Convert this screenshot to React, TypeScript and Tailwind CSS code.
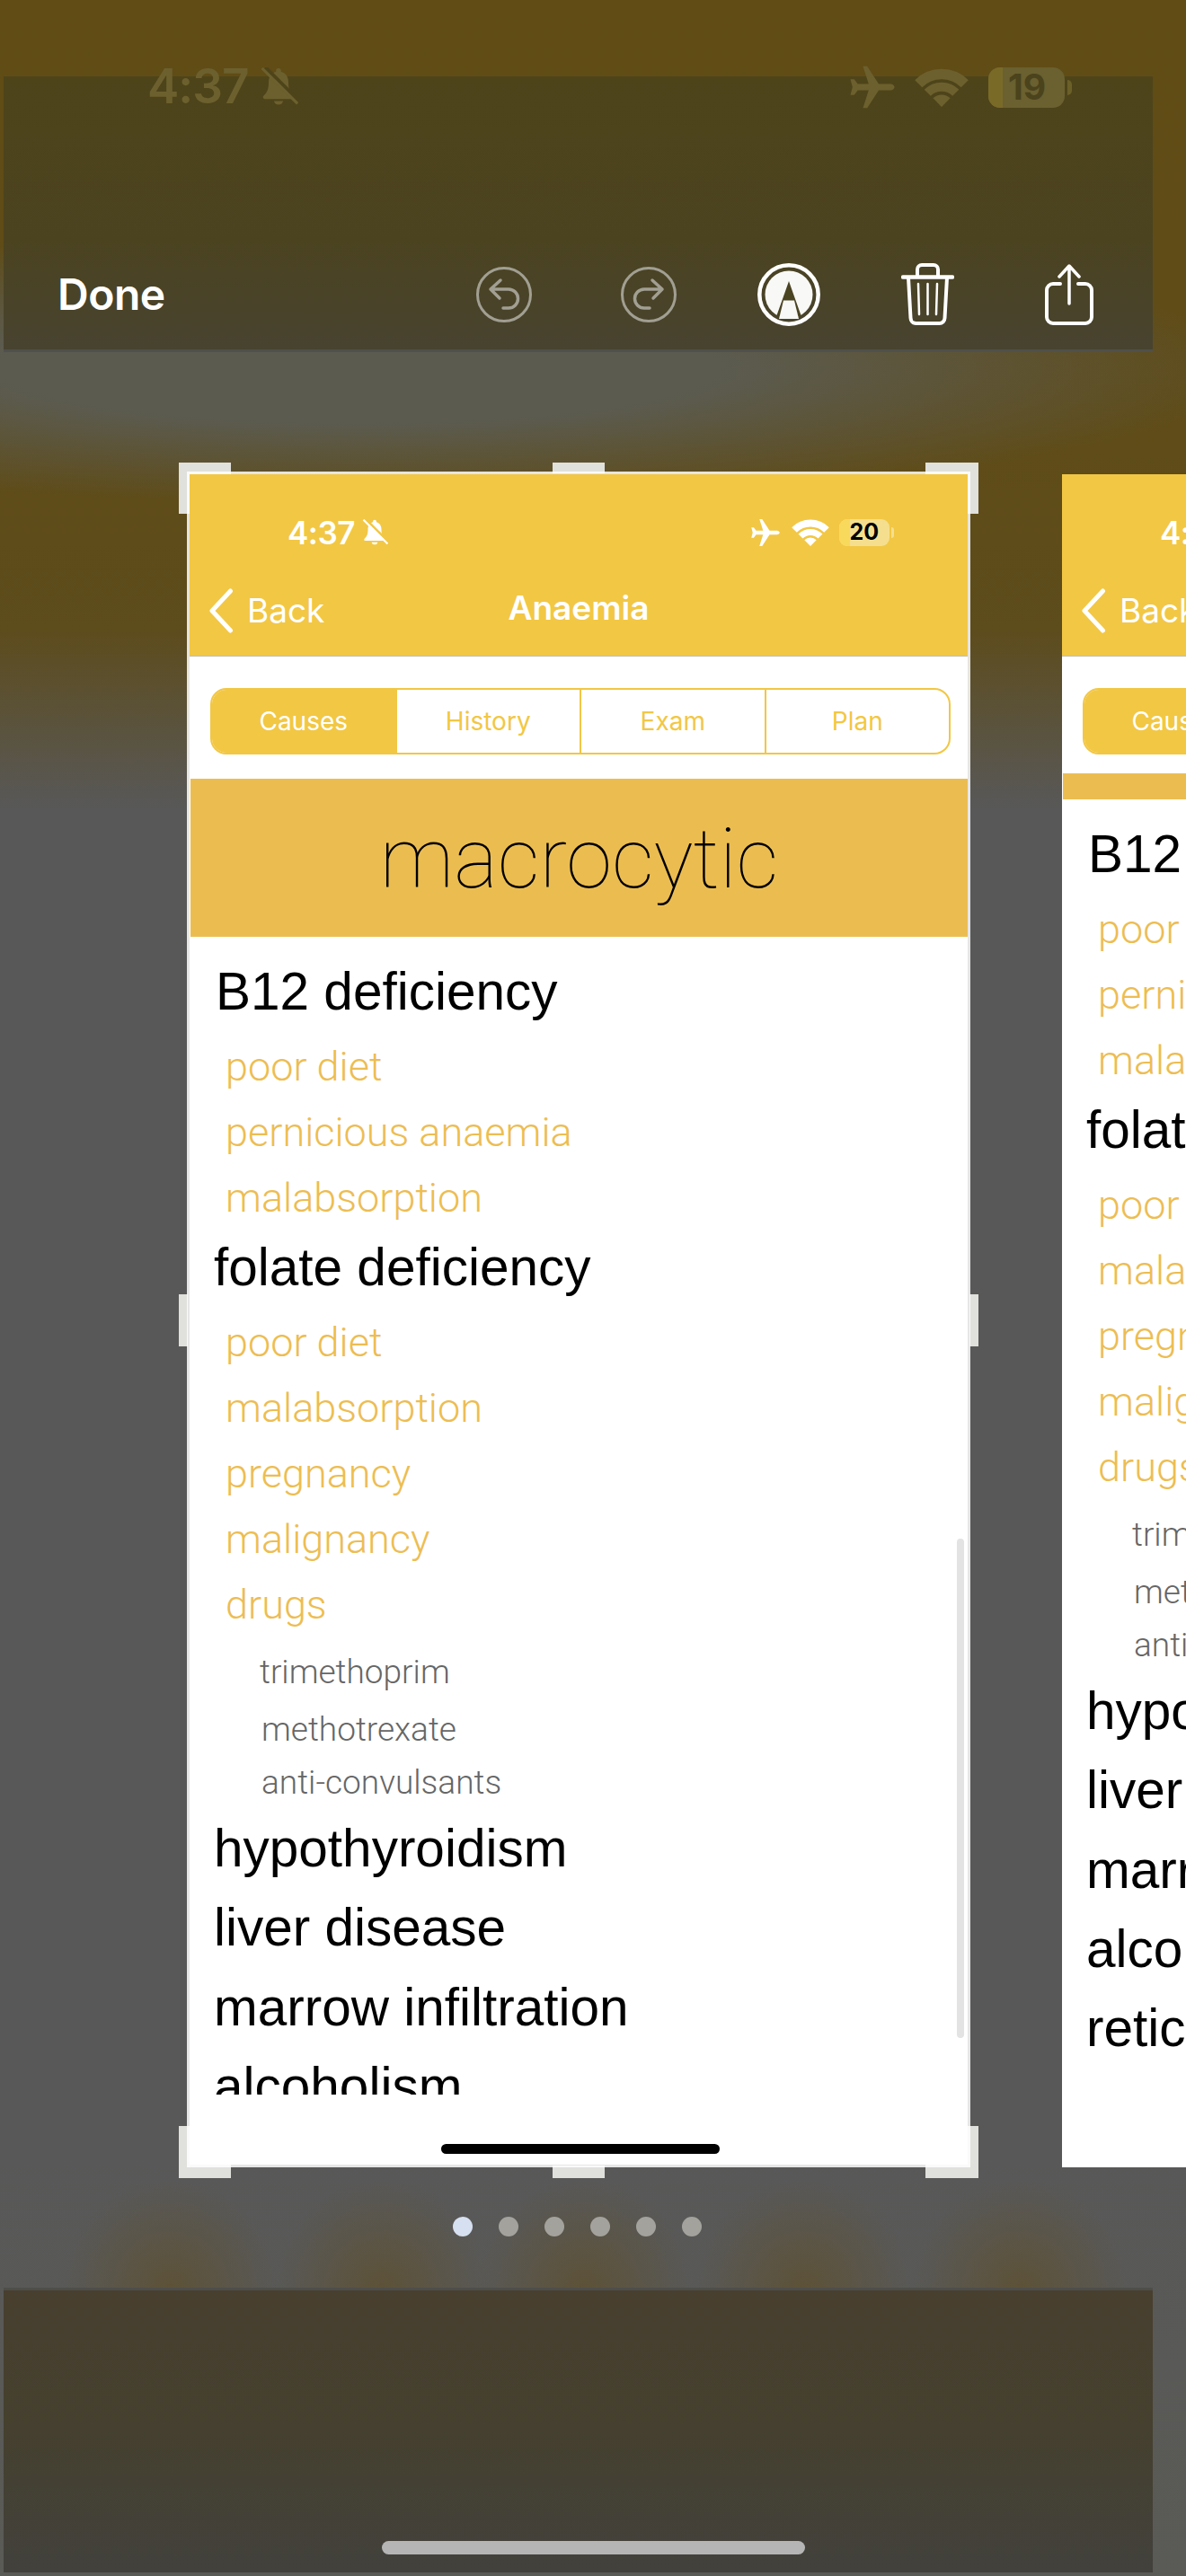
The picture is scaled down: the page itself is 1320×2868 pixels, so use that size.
import React from 'react';

type Row = { text: string; cls: string };

const BIG = "font-['Liberation_Sans',sans-serif] text-[58.5px] leading-[60px] text-black";
const SUB = "font-['Roboto',sans-serif] font-light text-[45px] leading-[60px] text-[#edbd52]";
const DRUG = "font-['Roboto',sans-serif] font-light text-[37px] leading-[50px] text-[#666666]";

const rows: Row[] = [
  { text: 'B12 deficiency', cls: `${BIG} ml-[29px]` },
  { text: 'poor diet', cls: `${SUB} ml-[40px] mt-[24px]` },
  { text: 'pernicious anaemia', cls: `${SUB} ml-[40px] mt-[13px]` },
  { text: 'malabsorption', cls: `${SUB} ml-[40px] mt-[13px]` },
  { text: 'folate deficiency', cls: `${BIG} ml-[27px] mt-[17px]` },
  { text: 'poor diet', cls: `${SUB} ml-[40px] mt-[24px]` },
  { text: 'malabsorption', cls: `${SUB} ml-[40px] mt-[13px]` },
  { text: 'pregnancy', cls: `${SUB} ml-[40px] mt-[13px]` },
  { text: 'malignancy', cls: `${SUB} ml-[40px] mt-[13px]` },
  { text: 'drugs', cls: `${SUB} ml-[40px] mt-[13px]` },
  { text: 'trimethoprim', cls: `${DRUG} ml-[78px] mt-[20px]` },
  { text: 'methotrexate', cls: `${DRUG} ml-[80px] mt-[14px]` },
  { text: 'anti-convulsants', cls: `${DRUG} ml-[80px] mt-[9px]` },
  { text: 'hypothyroidism', cls: `${BIG} ml-[27px] mt-[18px]` },
  { text: 'liver disease', cls: `${BIG} ml-[27px] mt-[28px]` },
  { text: 'marrow infiltration', cls: `${BIG} ml-[27px] mt-[29px]` },
  { text: 'alcoholism', cls: `${BIG} ml-[27px] mt-[28px]` },
  { text: 'reticulocytosis', cls: `${BIG} ml-[27px] mt-[28px]` },
];

function BellSlash({ color, cut, className }: { color: string; cut: string; className: string }) {
  return (
    <svg viewBox="0 0 24 24" className={className}>
      <path
        fill={color}
        d="M12 .5c-.9 0-1.500.6-1.500 1.500v.6C7.400 3.400 6 6 6 9.200c0 4.300-1 6-2.500 7.500-.6.6-.9 1-.9 1.500 0 .6.4 1 1.100 1H20.300c.7 0 1.100-.4 1.100-1 0-.5-.3-.9-.9-1.500C19 15.200 18 13.500 18 9.200 18 6 16.600 3.400 13.500 2.600V2C13.500 1.100 12.900.5 12 .5zM9.200 20.500a2.900 2.900 0 0 0 5.600 0z"
      />
      <path d="M4 0 24.500 20.500" stroke={cut} strokeWidth="2.200" />
      <path d="M2 .5 23.500 22" stroke={color} strokeWidth="1.700" />
    </svg>
  );
}

function Plane({ color, className }: { color: string; className: string }) {
  return (
    <svg viewBox="0 0 24 24" className={className}>
      <path
        fill={color}
        transform="rotate(90 12 12)"
        d="M22 16.500v-2l-8.500-5.500V3.500C13.500 2.500 12.800 1.500 12 1.500S10.500 2.500 10.500 3.500V9L2 14.500v2l8.500-2.700V19l-2.300 1.700V22.500L12 21.500l3.800 1v-1.800L13.500 19v-5.200z"
      />
    </svg>
  );
}

function Wifi({ color, className }: { color: string; className: string }) {
  return (
    <svg viewBox="-1 0 42 30" fill="none" className={className}>
      <path d="M2 12A25.500 25.500 0 0 1 38 12" stroke={color} strokeWidth="8" />
      <path d="M9 19A15.500 15.500 0 0 1 31 19" stroke={color} strokeWidth="7" />
      <path d="M20 30 13.300 23.300A9.500 9.500 0 0 1 26.700 23.300z" fill={color} />
    </svg>
  );
}

function Undo({ flip }: { flip?: boolean }) {
  return (
    <svg viewBox="0 0 62 62" fill="none" stroke="#a19f92" className={flip ? 'w-[62px] h-[62px] -scale-x-100' : 'w-[62px] h-[62px]'}>
      <circle cx="31" cy="31" r="29.500" strokeWidth="3" />
      <path d="M27 15 16 25 26 35M16 25H36a10.500 10.500 0 0 1 0 21H30" strokeWidth="3.500" strokeLinecap="round" strokeLinejoin="round" />
    </svg>
  );
}

function Markup() {
  return (
    <svg viewBox="0 0 70 70" className="w-[70px] h-[70px]">
      <circle cx="35" cy="35" r="32.700" fill="none" stroke="#fff" strokeWidth="4.500" />
      <circle cx="35" cy="35" r="26.500" fill="#f8f8f6" />
      <path d="M35 20 41 37 49 59.500 21 59.500 29 37z" fill="#4b4423" />
      <path d="M29 41.500H41L46 62H24z" fill="#f8f8f6" />
    </svg>
  );
}

function Trash() {
  return (
    <svg viewBox="0 0 59 69" fill="none" stroke="#fff" strokeLinecap="round" strokeLinejoin="round" className="w-[59px] h-[69px]">
      <path d="M2 15.500H57" strokeWidth="4.500" />
      <path d="M18 14V7a5 5 0 0 1 5-5H36a5 5 0 0 1 5 5V14" strokeWidth="4" />
      <path d="M8 16 10.500 61a6 6 0 0 0 6 6H42.500a6 6 0 0 0 6-6L51 16" strokeWidth="4" />
      <path d="M19 23 20 57M29.500 23V57M40 23 39 57" strokeWidth="2.500" />
    </svg>
  );
}

function Share() {
  return (
    <svg viewBox="0 0 54 68" fill="none" stroke="#fff" strokeLinecap="round" strokeLinejoin="round" className="w-[54px] h-[68px]">
      <path d="M27 44V3M16 14 27 2 38 14" strokeWidth="3.500" />
      <path d="M17 22H9a7 7 0 0 0-7 7V59a7 7 0 0 0 7 7H45a7 7 0 0 0 7-7V29a7 7 0 0 0-7-7H37" strokeWidth="4" />
    </svg>
  );
}

function Segment({ label, active, last }: { label: string; active?: boolean; last?: boolean }) {
  return (
    <div
      className={`flex-1 flex items-center justify-center text-[28px] ${active ? 'bg-[#f2c744] text-white' : 'text-[#f2c744]'} ${last ? '' : 'border-r-2 border-[#f2c744]'}`}
    >
      {label}
    </div>
  );
}

function ScreenCard({ band, bandGap, first }: { band?: string; bandGap: string; first?: boolean }) {
  return (
    <div
      className={`relative h-[1888px] shrink-0 bg-white bg-clip-padding flex flex-col ${first ? 'w-[872px] border-[3px] border-white/85' : 'w-[866px] border-t-[3px] border-transparent'}`}
    >
      <div className="h-[203px] shrink-0 bg-[#f2c744] border-b border-[#c4bfa8] flex flex-col text-white">
        <div className="h-[60px] mt-[35px] flex items-center">
          <div className="ml-[109px] text-[35px] font-semibold tracking-[-0.5px]">4:37</div>
          <BellSlash color="#fff" cut="#f2c744" className="ml-[7px] w-[30px] h-[30px]" />
          <Plane color="#fff" className="ml-[402px] w-[36px] h-[36px]" />
          <Wifi color="#fff" className="ml-[11px] w-[42px] h-[30px]" />
          <div className="relative ml-[11px] w-[56px] h-[30px] rounded-[9px] bg-[#f5df8e] overflow-hidden flex items-center justify-center text-[25px] font-bold text-black">
            <div className="absolute left-0 top-0 bottom-0 w-[12px] bg-[#f9d95c]" />
            <span className="relative">20</span>
          </div>
          <div className="ml-[2px] w-[3px] h-[12px] rounded-r-full bg-[#f5df8e]" />
        </div>
        <div className="relative flex-1 flex items-center justify-center">
          <div className="absolute left-[21px] inset-y-0 pt-[6px] flex items-center">
            <svg viewBox="0 0 28 50" fill="none" className="w-[28px] h-[50px]">
              <path d="M24.500 3 4 25 24.500 47" stroke="#fff" strokeWidth="5" strokeLinecap="round" strokeLinejoin="round" />
            </svg>
            <span className="ml-[15px] text-[37px]">Back</span>
          </div>
          <span className="text-[37px] font-semibold">Anaemia</span>
        </div>
      </div>

      <div className="ml-[23px] mr-[19px] mt-[35px] h-[74px] shrink-0 flex rounded-[18px] border-2 border-[#f2c744] overflow-hidden font-['Inter',sans-serif]">
        <Segment label="Causes" active />
        <Segment label="History" />
        <Segment label="Exam" />
        <Segment label="Plan" last />
      </div>

      <div className={`relative h-[1465px] shrink-0 overflow-hidden ${bandGap}`}>
        {first ? (
          <div className="ml-[1px] h-[176px] pt-[4px] bg-[#ebbd51] flex items-center justify-center font-['Roboto',sans-serif] font-thin text-[92px] text-black">
            {band}
          </div>
        ) : (
          <div className="ml-[1px] h-[29px] bg-[#ebbd51]" />
        )}
        <div className="flex flex-col mt-[31px]">
          {rows.map((r, i) => (
            <div key={i} className={r.cls}>
              {r.text}
            </div>
          ))}
        </div>
      </div>

      {first && (
        <div className="absolute left-[854px] top-[1185px] w-[8px] h-[556px] rounded-full bg-[#e3e3e3]" />
      )}

      <div className="flex-1 flex justify-center pt-[55px]">
        <div className="ml-[4px] w-[310px] h-[11px] rounded-full bg-black" />
      </div>
    </div>
  );
}

function Handles() {
  return (
    <>
      <div className="absolute -left-[9px] -top-[10px] w-[58px] h-[57px] bg-[#e0e0dc]" />
      <div className="absolute left-[407px] -top-[10px] w-[58px] h-[12px] bg-[#e0e0dc]" />
      <div className="absolute -right-[9px] -top-[10px] w-[59px] h-[57px] bg-[#e0e0dc]" />
      <div className="absolute -left-[9px] top-[916px] w-[10px] h-[58px] bg-[#e0e0dc]" />
      <div className="absolute -right-[9px] top-[916px] w-[10px] h-[58px] bg-[#e0e0dc]" />
      <div className="absolute -left-[9px] -bottom-[12px] w-[58px] h-[58px] bg-[#e0e0dc]" />
      <div className="absolute left-[407px] -bottom-[12px] w-[58px] h-[14px] bg-[#e0e0dc]" />
      <div className="absolute -right-[9px] -bottom-[12px] w-[59px] h-[58px] bg-[#e0e0dc]" />
    </>
  );
}

export default function App() {
  return (
    <div className="relative w-[1320px] h-[2868px] overflow-hidden flex flex-col font-['Inter',sans-serif] bg-[radial-gradient(ellipse_120px_120px_at_190px_2547px,#5d5238,transparent),radial-gradient(ellipse_120px_120px_at_425px_2547px,#5d5238,transparent),radial-gradient(ellipse_120px_120px_at_650px_2547px,#5d5238,transparent),radial-gradient(ellipse_120px_120px_at_895px_2547px,#5d5238,transparent),radial-gradient(ellipse_120px_120px_at_1135px_2547px,#5d5238,transparent),radial-gradient(ellipse_1000px_150px_at_400px_410px,#5b5b50_40%,transparent),linear-gradient(to_bottom,#614c15_0px,#5f4c18_500px,#5d4c1c_700px,#585858_900px,#585858_2400px,#5a5a56_2868px)]">
      <div className="ml-[4px] mt-[85px] w-[1279px] h-[307px] shrink-0 flex flex-col bg-[linear-gradient(to_bottom,#4e441a,#4b4320_60%,#484330)] border-b-[3px] border-[#50504c]">
        <div className="-mt-[11px] h-[46px] flex items-center text-[#6c602e]">
          <div className="ml-[160px] text-[53px] font-semibold tracking-[-1px]">4:37</div>
          <BellSlash color="#6c602e" cut="#4e441a" className="ml-[12px] w-[44px] h-[44px]" />
          <Plane color="#6c602e" className="ml-[611px] w-[56px] h-[56px]" />
          <Wifi color="#6c602e" className="ml-[19px] w-[60px] h-[43px]" />
          <div className="relative ml-[22px] w-[85px] h-[45px] rounded-[13px] bg-[#6a6030] overflow-hidden flex items-center justify-center text-[39px] font-bold text-[#4b431c]">
            <div className="absolute left-0 top-0 bottom-0 w-[16px] bg-[#7a6a28]" />
            <span className="relative">19</span>
          </div>
          <div className="ml-[3px] w-[5px] h-[17px] rounded-r-full bg-[#6b6028]" />
        </div>

        <div className="mt-[172px] h-[71px] flex items-center text-white">
          <div className="ml-[60px] text-[48px] font-semibold tracking-[-0.5px]">Done</div>
          <div className="ml-[346px]"><Undo /></div>
          <div className="ml-[99px]"><Undo flip /></div>
          <div className="ml-[90px]"><Markup /></div>
          <div className="ml-[90px]"><Trash /></div>
          <div className="ml-[101px]"><Share /></div>
        </div>
      </div>

      <div className="mt-[133px] ml-[208px] flex gap-[102px] shrink-0">
        <div className="relative shrink-0">
          <Handles />
          <ScreenCard band="macrocytic" bandGap="mt-[27px]" first />
        </div>
        <ScreenCard bandGap="mt-[21px]" />
      </div>

      <div className="mt-[55px] ml-[504px] flex gap-[29px] shrink-0">
        <div className="w-[22px] h-[22px] rounded-full bg-[#d6e0f0]" />
        <div className="w-[22px] h-[22px] rounded-full bg-[#a3a29c]" />
        <div className="w-[22px] h-[22px] rounded-full bg-[#a3a29c]" />
        <div className="w-[22px] h-[22px] rounded-full bg-[#a3a29c]" />
        <div className="w-[22px] h-[22px] rounded-full bg-[#a3a29c]" />
        <div className="w-[22px] h-[22px] rounded-full bg-[#a3a29c]" />
      </div>

      <div className="ml-[4px] mt-[57px] w-[1279px] h-[317px] shrink-0 flex flex-col items-center bg-[linear-gradient(to_bottom,#483f2f,#45402f_50%,#42413c)] border-t-[3px] border-[#4e4e4b]">
        <div className="mt-[279px] ml-[34px] w-[471px] h-[15px] rounded-full bg-[#b5b5b5]" />
      </div>
    </div>
  );
}
